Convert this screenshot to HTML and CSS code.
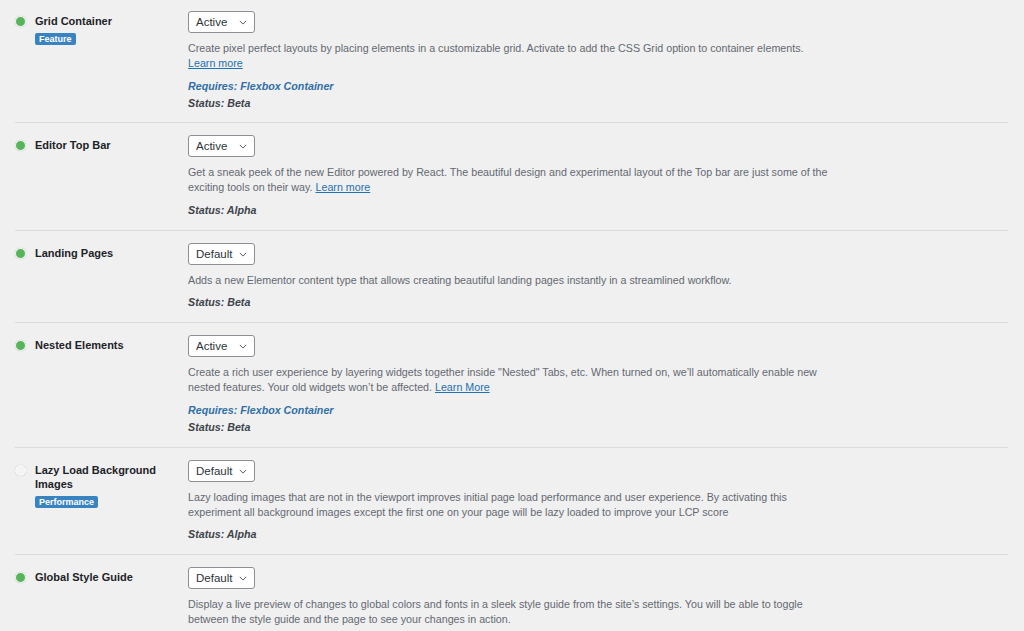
FILE: index.html
```html
<!DOCTYPE html>
<html>
<head>
<meta charset="utf-8">
<link rel="stylesheet" href="styles.css">
</head>
<body>
<div class="list">
  <div class="row">
    <div class="label">
      <span class="dot on"></span>
      <div class="name">
        <div class="title">Grid Container</div>
        <span class="tag">Feature</span>
      </div>
    </div>
    <div class="field">
      <div class="select">Active<svg viewBox="0 0 10 6" class="chev"><path d="M1 1l4 4 4-4" fill="none" stroke="#50575e" stroke-width="1.2"/></svg></div>
      <p class="desc more">Create pixel perfect layouts by placing elements in a customizable grid. Activate to add the CSS Grid option to container elements.<br><a href="#">Learn more</a></p>
      <p class="req">Requires: Flexbox Container</p>
      <p class="status">Status: Beta</p>
    </div>
  </div>
  <div class="row">
    <div class="label">
      <span class="dot on"></span>
      <div class="name"><div class="title">Editor Top Bar</div></div>
    </div>
    <div class="field">
      <div class="select">Active<svg viewBox="0 0 10 6" class="chev"><path d="M1 1l4 4 4-4" fill="none" stroke="#50575e" stroke-width="1.2"/></svg></div>
      <p class="desc more">Get a sneak peek of the new Editor powered by React. The beautiful design and experimental layout of the Top bar are just some of the exciting tools on their way. <a href="#">Learn more</a></p>
      <p class="status">Status: Alpha</p>
    </div>
  </div>
  <div class="row">
    <div class="label">
      <span class="dot on"></span>
      <div class="name"><div class="title">Landing Pages</div></div>
    </div>
    <div class="field">
      <div class="select">Default<svg viewBox="0 0 10 6" class="chev"><path d="M1 1l4 4 4-4" fill="none" stroke="#50575e" stroke-width="1.2"/></svg></div>
      <p class="desc">Adds a new Elementor content type that allows creating beautiful landing pages instantly in a streamlined workflow.</p>
      <p class="status">Status: Beta</p>
    </div>
  </div>
  <div class="row">
    <div class="label">
      <span class="dot on"></span>
      <div class="name"><div class="title">Nested Elements</div></div>
    </div>
    <div class="field">
      <div class="select">Active<svg viewBox="0 0 10 6" class="chev"><path d="M1 1l4 4 4-4" fill="none" stroke="#50575e" stroke-width="1.2"/></svg></div>
      <p class="desc more">Create a rich user experience by layering widgets together inside "Nested" Tabs, etc. When turned on, we’ll automatically enable new nested features. Your old widgets won’t be affected. <a href="#">Learn More</a></p>
      <p class="req">Requires: Flexbox Container</p>
      <p class="status">Status: Beta</p>
    </div>
  </div>
  <div class="row">
    <div class="label">
      <span class="dot off"></span>
      <div class="name">
        <div class="title">Lazy Load Background Images</div>
        <span class="tag">Performance</span>
      </div>
    </div>
    <div class="field">
      <div class="select">Default<svg viewBox="0 0 10 6" class="chev"><path d="M1 1l4 4 4-4" fill="none" stroke="#50575e" stroke-width="1.2"/></svg></div>
      <p class="desc">Lazy loading images that are not in the viewport improves initial page load performance and user experience. By activating this experiment all background images except the first one on your page will be lazy loaded to improve your LCP score</p>
      <p class="status">Status: Alpha</p>
    </div>
  </div>
  <div class="row">
    <div class="label">
      <span class="dot on"></span>
      <div class="name"><div class="title">Global Style Guide</div></div>
    </div>
    <div class="field">
      <div class="select">Default<svg viewBox="0 0 10 6" class="chev"><path d="M1 1l4 4 4-4" fill="none" stroke="#50575e" stroke-width="1.2"/></svg></div>
      <p class="desc">Display a live preview of changes to global colors and fonts in a sleek style guide from the site’s settings. You will be able to toggle between the style guide and the page to see your changes in action.</p>
      <p class="status">Status: Alpha</p>
    </div>
  </div>
</div>
</body>
</html>
```
FILE: styles.css
```css
html, body {
  margin: 0;
  background: #f0f0f1;
  font-family: "Liberation Sans", Arial, sans-serif;
  color: #3c434a;
}
.list {
  padding: 0 16px 0 15px;
}
.row {
  display: flex;
  padding: 12px 0;
  border-bottom: 1px solid #dcdcde;
}
.row:first-child {
  padding-top: 11px;
  padding-bottom: 11px;
}
.label {
  width: 173px;
  flex: none;
  display: flex;
  align-items: flex-start;
  gap: 9px;
  padding-top: 5px;
}
.dot {
  flex: none;
  box-sizing: border-box;
  width: 11px;
  height: 11px;
  border-radius: 50%;
  border: 1.5px solid #fff;
  box-shadow: 0 0 1px rgba(0, 0, 0, 0.25);
}
.dot.on { background: #56b45a; }
.dot.off { background: #f4f4f5; }
.name {
  width: 128px;
}
.title {
  font-size: 11px;
  font-weight: bold;
  line-height: 14px;
  color: #1d2327;
  margin-top: -2px;
}
.tag {
  display: inline-block;
  margin-top: 3px;
  background: #3a83c1;
  color: #fff;
  font-size: 9px;
  font-weight: bold;
  line-height: 12px;
  padding: 0 4px;
  border-radius: 2px;
}
.field {
  flex: 1;
}
.select {
  box-sizing: border-box;
  width: 67px;
  height: 22px;
  background: #fff;
  border: 1px solid #8c8f94;
  border-radius: 3px;
  font-size: 11.5px;
  line-height: 20px;
  color: #2c3338;
  display: flex;
  align-items: center;
  justify-content: space-between;
  padding: 0 7px;
}
.chev {
  width: 8px;
  height: 5px;
}
.desc {
  margin: 8px 0 7px;
  font-size: 10.7px;
  line-height: 15px;
  color: #646970;
  max-width: 645px;
}
.desc.more {
  margin-bottom: 8px;
}
.desc a {
  color: #2271b1;
}
.req {
  margin: 0 0 2px;
  font-size: 10.7px;
  line-height: 15px;
  font-weight: bold;
  font-style: italic;
  color: #2f6fa6;
}
.status {
  margin: 0;
  font-size: 10.7px;
  line-height: 15px;
  font-weight: bold;
  font-style: italic;
  color: #3c434a;
}
```
